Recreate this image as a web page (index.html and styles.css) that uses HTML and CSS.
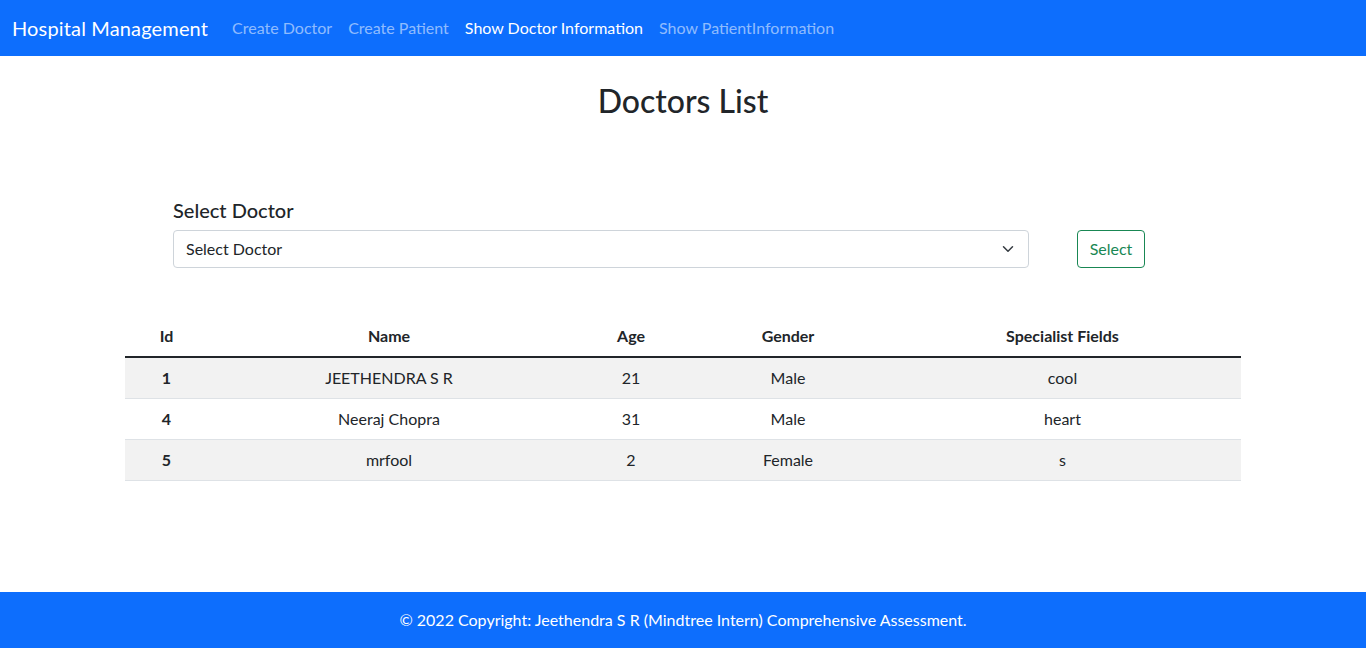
FILE: index.html
```html
<!DOCTYPE html>
<html lang="en">
<head>
<meta charset="utf-8">
<title>Hospital Management</title>
<link rel="stylesheet" href="styles.css">
</head>
<body>
<div class="page">
  <nav class="navbar">
    <a class="brand" href="#">Hospital Management</a>
    <ul class="nav">
      <li><a class="nav-link" href="#">Create Doctor</a></li>
      <li><a class="nav-link" href="#">Create Patient</a></li>
      <li><a class="nav-link active" href="#">Show Doctor Information</a></li>
      <li><a class="nav-link" href="#">Show PatientInformation</a></li>
    </ul>
  </nav>

  <main class="container">
    <h2 class="title">Doctors List</h2>

    <form class="select-form">
      <div class="field">
        <label class="field-label" for="doctor">Select Doctor</label>
        <div class="select">
          <span class="select-text">Select Doctor</span>
          <svg class="chevron" width="16" height="16" viewBox="0 0 16 16"><path d="M2 5l6 6 6-6" fill="none" stroke="#343a40" stroke-width="2" stroke-linecap="round" stroke-linejoin="round"/></svg>
        </div>
      </div>
      <button type="button" class="btn-outline">Select</button>
    </form>

    <table class="table">
      <colgroup>
        <col class="c-id"><col class="c-name"><col class="c-age"><col class="c-gender"><col class="c-spec">
      </colgroup>
      <thead>
        <tr><th>Id</th><th>Name</th><th>Age</th><th>Gender</th><th>Specialist Fields</th></tr>
      </thead>
      <tbody>
        <tr class="striped"><th>1</th><td>JEETHENDRA S R</td><td>21</td><td>Male</td><td>cool</td></tr>
        <tr><th>4</th><td>Neeraj Chopra</td><td>31</td><td>Male</td><td>heart</td></tr>
        <tr class="striped"><th>5</th><td>mrfool</td><td>2</td><td>Female</td><td>s</td></tr>
      </tbody>
    </table>
  </main>

  <footer class="footer">© 2022 Copyright: Jeethendra S R (Mindtree Intern) Comprehensive Assessment.</footer>
</div>
</body>
</html>
```
FILE: styles.css
```css
* { box-sizing: border-box; }
html, body { margin: 0; padding: 0; }
body {
  font-family: "Segoe UI", "Lato", "Liberation Sans", sans-serif;
  font-size: 16px;
  line-height: 1.5;
  color: #212529;
  background: #fff;
}
.page {
  min-height: 648px;
  display: flex;
  flex-direction: column;
}
.navbar {
  height: 56px;
  background: #0d6efd;
  display: flex;
  align-items: center;
  padding: 0 12px;
}
.brand {
  color: #fff;
  font-size: 20px;
  letter-spacing: 0.15px;
  text-decoration: none;
  margin-right: 16px;
  line-height: 30px;
}
.nav {
  list-style: none;
  margin: 0;
  padding: 0;
  display: flex;
}
.nav-link {
  display: block;
  padding: 8px;
  color: rgba(255,255,255,0.55);
  text-decoration: none;
}
.nav-link.active { color: #fff; }

.container {
  width: 1140px;
  margin: 0 auto;
  padding: 0 12px;
  flex: 1;
}
.title {
  margin: 26px 0 0;
  font-size: 32px;
  font-weight: 500;
  line-height: 1.2;
  text-align: center;
}
.select-form {
  margin-top: 75px;
  padding-left: 48px;
  display: flex;
  align-items: flex-end;
  gap: 48px;
}
.field { display: flex; flex-direction: column; }
.field-label {
  font-size: 20px;
  font-weight: 500;
  line-height: 30px;
  margin-bottom: 5px;
}
.select {
  width: 856px;
  height: 38px;
  border: 1px solid #ced4da;
  border-radius: 4px;
  display: flex;
  align-items: center;
  justify-content: space-between;
  padding: 0 12px;
}
.chevron { width: 16px; height: 12px; }
.btn-outline {
  font-family: inherit;
  font-size: 16px;
  line-height: 24px;
  height: 38px;
  width: 68px;
  padding: 6px 0;
  color: #198754;
  background: #fff;
  border: 1px solid #198754;
  border-radius: 4px;
}
.table {
  width: 100%;
  margin-top: 48px;
  border-collapse: collapse;
  table-layout: fixed;
}
.c-id { width: 83px; }
.c-name { width: 362px; }
.c-age { width: 122px; }
.c-gender { width: 192px; }
.c-spec { width: 357px; }
.table th, .table td {
  padding: 8px;
  text-align: center;
  border-bottom: 1px solid #dee2e6;
  line-height: 24px;
}
.table th { font-weight: 700; }
.table thead th { border-bottom: 2px solid #212529; }
.table tr.striped { background: #f2f2f2; }
.footer {
  height: 56px;
  background: #0d6efd;
  color: #fff;
  display: flex;
  align-items: center;
  justify-content: center;
}
```
